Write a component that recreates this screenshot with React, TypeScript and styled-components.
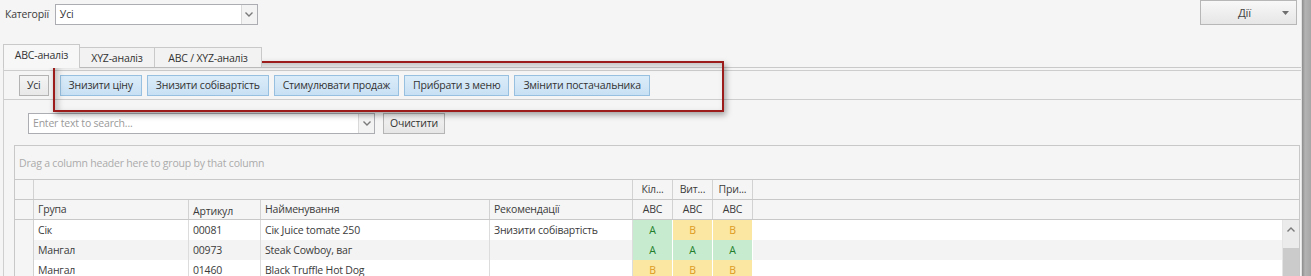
import React from "react";
import styled, { createGlobalStyle } from "styled-components";

const GlobalStyle = createGlobalStyle`
  html, body {
    margin: 0;
    padding: 0;
    background: #f5f5f5;
  }
  body {
    font-family: "Open Sans", "Liberation Sans", sans-serif;
    font-size: 10.5px;
    letter-spacing: -0.2px;
    color: #3b3b3b;
  }
`;

const Screen = styled.div`
  position: relative;
  width: 1311px;
  height: 276px;
  overflow: hidden;
  display: flex;
  background: #f5f5f5;
`;

const Main = styled.div`
  flex: 1;
  min-width: 0;
  display: flex;
  flex-direction: column;
`;

const EdgeStrip = styled.div`
  width: 9px;
  border-left: 1px solid #e2e2e2;
  background: linear-gradient(to right, #8c8c8c, #b3b3b3 35%, #a6a6a6);
`;

/* top bar */

const TopBar = styled.div`
  height: 25px;
  display: flex;
  align-items: flex-start;
  padding: 0 4px 0 5px;
`;

const FieldLabel = styled.span`
  margin-top: 7px;
  margin-right: 6px;
  line-height: 14px;
`;

const Combo = styled.div<{ $width: number; $top?: number }>`
  width: ${(p) => p.$width}px;
  height: 21px;
  margin-top: ${(p) => p.$top ?? 0}px;
  box-sizing: border-box;
  border: 1px solid #abadb3;
  background: #fff;
  display: flex;
  align-items: stretch;
`;

const ComboText = styled.div<{ $muted?: boolean }>`
  flex: 1;
  padding-left: 4px;
  line-height: 19px;
  color: ${(p) => (p.$muted ? "#9a9a9a" : "#333")};
  white-space: nowrap;
  overflow: hidden;
`;

const ComboArrow = styled.div`
  width: 15px;
  border-left: 1px solid #d9d9d9;
  background: #f3f3f3;
  display: flex;
  align-items: center;
  justify-content: center;
`;

const Spacer = styled.div`
  flex: 1;
`;

const ActionsButton = styled.div`
  width: 97px;
  height: 25px;
  box-sizing: border-box;
  border: 1px solid #b7b7b7;
  background: linear-gradient(#f8f8f8, #e6e6e6);
  display: grid;
  grid-template-columns: 1fr 14px;
  align-items: center;
  font-size: 11.5px;
  color: #444;
`;

const ActionsLabel = styled.span`
  text-align: center;
  padding-left: 6px;
`;

/* tabs */

const TabStrip = styled.div`
  margin-top: 19px;
  height: 23px;
  display: flex;
  align-items: flex-end;
  padding-left: 3px;
  position: relative;
  z-index: 1;
`;

const Tab = styled.div<{ $active?: boolean; $width: number }>`
  width: ${(p) => p.$width}px;
  height: ${(p) => (p.$active ? 24 : 20)}px;
  margin-bottom: ${(p) => (p.$active ? -1 : 0)}px;
  box-sizing: border-box;
  border: 1px solid #c9c9c9;
  border-bottom: none;
  margin-left: ${(p) => (p.$active ? 0 : -1)}px;
  background: ${(p) => (p.$active ? "#f7f7f7" : "#f2f2f2")};
  display: flex;
  align-items: center;
  justify-content: center;
  padding-bottom: ${(p) => (p.$active ? 3 : 0)}px;
  color: #333;
`;

const TabPanel = styled.div`
  flex: 1;
  margin-left: 3px;
  border-top: 1px solid #c9c9c9;
  border-left: 1px solid #cfcfcf;
  display: flex;
  flex-direction: column;
  min-height: 0;
`;

/* toolbar */

const Toolbar = styled.div`
  margin-top: 2px;
  height: 30px;
  box-sizing: border-box;
  border-top: 1px solid #cdcdcd;
  border-bottom: 1px solid #cdcdcd;
  display: flex;
  align-items: flex-start;
  padding: 4px 0 0 15px;
`;

const ToolButton = styled.div<{ $primary?: boolean }>`
  height: 21px;
  box-sizing: border-box;
  padding: 0 ${(p) => (p.$primary ? 8 : 7)}px;
  margin-right: ${(p) => (p.$primary ? 5 : 11)}px;
  border: 1px solid ${(p) => (p.$primary ? "#96bfe0" : "#b3b3b3")};
  background: ${(p) =>
    p.$primary ? "linear-gradient(#dbecf9, #c8e0f4)" : "linear-gradient(#f4f4f4, #e8e8e8)"};
  line-height: 19px;
  white-space: nowrap;
  color: #333;
`;

/* search */

const SearchRow = styled.div`
  margin-top: 13px;
  padding-left: 24px;
  display: flex;
  align-items: center;
  gap: 8px;
`;

const PlainButton = styled.div`
  height: 21px;
  box-sizing: border-box;
  padding: 0 6px;
  border: 1px solid #b5b5b5;
  background: linear-gradient(#f3f3f3, #e6e6e6);
  line-height: 19px;
  color: #333;
`;

/* grid */

const Grid = styled.div`
  flex: 1;
  margin: 11px 1px 0 10px;
  border-top: 1px solid #c8c8c8;
  border-left: 1px solid #c8c8c8;
  border-right: 1px solid #c8c8c8;
  display: flex;
  flex-direction: column;
  min-height: 0;
`;

const GroupPanel = styled.div`
  height: 33px;
  border-bottom: 1px solid #c8c8c8;
  padding-left: 4px;
  display: flex;
  align-items: center;
  color: #ababab;
`;

const COLUMNS = "19px 155px 72px 229px 143px 40px 40px 40px 1fr";

const HeaderRow = styled.div`
  display: grid;
  grid-template-columns: ${COLUMNS};
  height: 20px;
  box-sizing: border-box;
  border-bottom: 1px solid #c8c8c8;
  background: #f5f5f5;
`;

const HeadCell = styled.div<{ $span?: number; $center?: boolean; $drop?: number }>`
  grid-column: span ${(p) => p.$span ?? 1};
  border-right: 1px solid #d2d2d2;
  padding: ${(p) => p.$drop ?? 0}px 4px 0;
  line-height: 19px;
  text-align: ${(p) => (p.$center ? "center" : "left")};
  white-space: nowrap;
  overflow: hidden;
  color: #3b3b3b;
`;

const HeadFill = styled.div``;

const DataArea = styled.div`
  flex: 1;
  display: flex;
  min-height: 0;
`;

const Rows = styled.div`
  flex: 1;
  min-width: 0;
`;

const DataRow = styled.div<{ $alt?: boolean }>`
  display: grid;
  grid-template-columns: ${COLUMNS};
  height: 20px;
  background: ${(p) => (p.$alt ? "#f3f3f3" : "#fff")};
`;

const Indicator = styled.div`
  background: #f5f5f5;
  border-right: 1px solid #d2d2d2;
`;

const Cell = styled.div`
  border-right: 1px solid #dcdcdc;
  padding-left: 4px;
  line-height: 20px;
  white-space: nowrap;
  overflow: hidden;
  color: #3b3b3b;
`;

const RankCell = styled.div<{ $rank: "A" | "B" }>`
  background: ${(p) => (p.$rank === "A" ? "#c7ebcf" : "#fbe6a2")};
  color: ${(p) => (p.$rank === "A" ? "#1f7f2c" : "#dc9a1c")};
  border-right: 1px solid #fff;
  border-bottom: 1px solid #fff;
  text-align: center;
  line-height: 20px;
`;

const RowFill = styled.div``;

const ScrollBar = styled.div`
  width: 16px;
  border-left: 1px solid #e4e4e4;
  display: flex;
  flex-direction: column;
`;

const ScrollUp = styled.div`
  height: 28px;
  background: #ebebeb;
  display: flex;
  justify-content: center;
  padding-top: 7px;
  box-sizing: border-box;
`;

const ScrollThumb = styled.div`
  flex: 1;
  background: #cbcbcb;
`;

const Annotation = styled.div`
  position: absolute;
  left: 53px;
  top: 61px;
  width: 671px;
  height: 51px;
  box-sizing: border-box;
  border: 2px solid #9c1b1b;
  box-shadow: 2px 3px 6px rgba(0, 0, 0, 0.35), inset 3px 3px 6px rgba(0, 0, 0, 0.22);
  pointer-events: none;
`;

const Chevron = ({ up }: { up?: boolean }) => (
  <svg width="8" height="5" viewBox="0 0 8 5">
    <polyline
      points={up ? "0.5,4.5 4,1 7.5,4.5" : "0.5,0.5 4,4 7.5,0.5"}
      fill="none"
      stroke="#7a7a7a"
      strokeWidth="1.4"
    />
  </svg>
);

const DropTriangle = () => (
  <svg width="7" height="4" viewBox="0 0 7 4">
    <polygon points="0,0 7,0 3.5,4" fill="#6f6f6f" />
  </svg>
);

type Rank = "A" | "B";

const rows: { group: string; code: string; name: string; advice: string; ranks: Rank[] }[] = [
  { group: "Сік", code: "00081", name: "Сік Juice tomate 250", advice: "Знизити собівартість", ranks: ["A", "B", "B"] },
  { group: "Мангал", code: "00973", name: "Steak Cowboy, ваг", advice: "", ranks: ["A", "A", "A"] },
  { group: "Мангал", code: "01460", name: "Black Truffle Hot Dog", advice: "", ranks: ["B", "B", "B"] },
];

const actions = [
  "Знизити ціну",
  "Знизити собівартість",
  "Стимулювати продаж",
  "Прибрати з меню",
  "Змінити постачальника",
];

export default function App() {
  return (
    <>
      <GlobalStyle />
      <Screen>
        <Main>
          <TopBar>
            <FieldLabel>Категорії</FieldLabel>
            <Combo $width={203} $top={4}>
              <ComboText>Усі</ComboText>
              <ComboArrow>
                <Chevron />
              </ComboArrow>
            </Combo>
            <Spacer />
            <ActionsButton>
              <ActionsLabel>Дії</ActionsLabel>
              <DropTriangle />
            </ActionsButton>
          </TopBar>

          <TabStrip>
            <Tab $active $width={77}>ABC-аналіз</Tab>
            <Tab $width={76}>XYZ-аналіз</Tab>
            <Tab $width={108}>ABC / XYZ-аналіз</Tab>
          </TabStrip>

          <TabPanel>
            <Toolbar>
              <ToolButton>Усі</ToolButton>
              {actions.map((a) => (
                <ToolButton key={a} $primary>
                  {a}
                </ToolButton>
              ))}
            </Toolbar>

            <SearchRow>
              <Combo $width={347}>
                <ComboText $muted>Enter text to search...</ComboText>
                <ComboArrow>
                  <Chevron />
                </ComboArrow>
              </Combo>
              <PlainButton>Очистити</PlainButton>
            </SearchRow>

            <Grid>
              <GroupPanel>Drag a column header here to group by that column</GroupPanel>
              <HeaderRow>
                <HeadCell />
                <HeadCell $span={4} />
                <HeadCell $center>Кіл...</HeadCell>
                <HeadCell $center>Вит...</HeadCell>
                <HeadCell $center>При...</HeadCell>
                <HeadFill />
              </HeaderRow>
              <HeaderRow>
                <HeadCell />
                <HeadCell>Група</HeadCell>
                <HeadCell $drop={2}>Артикул</HeadCell>
                <HeadCell>Найменування</HeadCell>
                <HeadCell>Рекомендації</HeadCell>
                <HeadCell $center>ABC</HeadCell>
                <HeadCell $center>ABC</HeadCell>
                <HeadCell $center>ABC</HeadCell>
                <HeadFill />
              </HeaderRow>
              <DataArea>
                <Rows>
                  {rows.map((r, i) => (
                    <DataRow key={r.code} $alt={i % 2 === 1}>
                      <Indicator />
                      <Cell>{r.group}</Cell>
                      <Cell>{r.code}</Cell>
                      <Cell>{r.name}</Cell>
                      <Cell>{r.advice}</Cell>
                      {r.ranks.map((k, j) => (
                        <RankCell key={j} $rank={k}>
                          {k}
                        </RankCell>
                      ))}
                      <RowFill />
                    </DataRow>
                  ))}
                </Rows>
                <ScrollBar>
                  <ScrollUp>
                    <Chevron up />
                  </ScrollUp>
                  <ScrollThumb />
                </ScrollBar>
              </DataArea>
            </Grid>
          </TabPanel>
        </Main>
        <EdgeStrip />
        <Annotation />
      </Screen>
    </>
  );
}
